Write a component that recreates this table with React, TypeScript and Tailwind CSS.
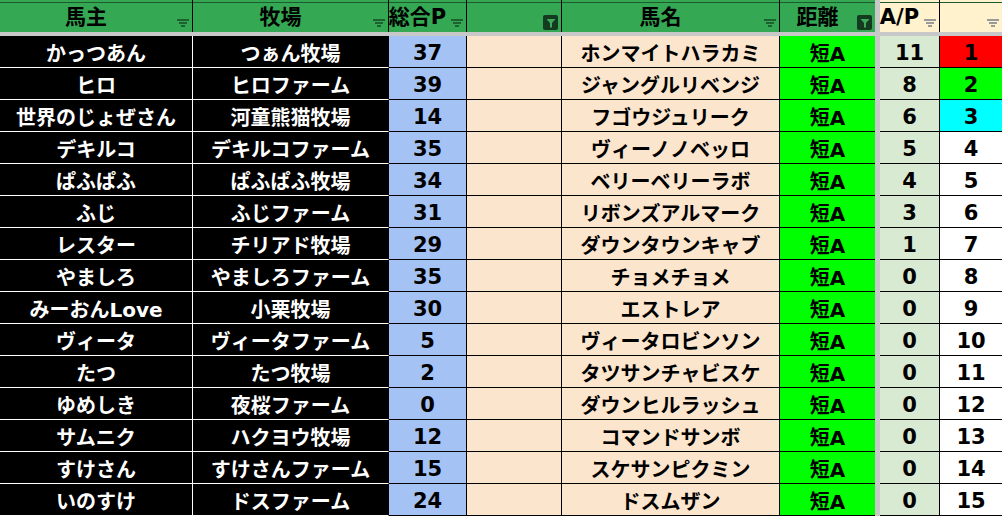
import React from 'react'

type Row = [string, string, string, string, string, string, string]

const rows: Row[] = [
  ['かっつあん', 'つぁん牧場', '37', 'ホンマイトハラカミ', '短A', '11', '1'],
  ['ヒロ', 'ヒロファーム', '39', 'ジャングルリベンジ', '短A', '8', '2'],
  ['世界のじょぜさん', '河童熊猫牧場', '14', 'フゴウジュリーク', '短A', '6', '3'],
  ['デキルコ', 'デキルコファーム', '35', 'ヴィーノノベッロ', '短A', '5', '4'],
  ['ぱふぱふ', 'ぱふぱふ牧場', '34', 'ベリーベリーラボ', '短A', '4', '5'],
  ['ふじ', 'ふじファーム', '31', 'リボンズアルマーク', '短A', '3', '6'],
  ['レスター', 'チリアド牧場', '29', 'ダウンタウンキャブ', '短A', '1', '7'],
  ['やましろ', 'やましろファーム', '35', 'チョメチョメ', '短A', '0', '8'],
  ['みーおんLove', '小栗牧場', '30', 'エストレア', '短A', '0', '9'],
  ['ヴィータ', 'ヴィータファーム', '5', 'ヴィータロビンソン', '短A', '0', '10'],
  ['たつ', 'たつ牧場', '2', 'タツサンチャビスケ', '短A', '0', '11'],
  ['ゆめしき', '夜桜ファーム', '0', 'ダウンヒルラッシュ', '短A', '0', '12'],
  ['サムニク', 'ハクヨウ牧場', '12', 'コマンドサンボ', '短A', '0', '13'],
  ['すけさん', 'すけさんファーム', '15', 'スケサンピクミン', '短A', '0', '14'],
  ['いのすけ', 'ドスファーム', '24', 'ドスムザン', '短A', '0', '15'],
]

const rankBg: Record<string, string> = {
  '1': 'bg-[#ff0000]',
  '2': 'bg-[#00ff00]',
  '3': 'bg-[#00ffff]',
}

const grid = 'grid grid-cols-[193px_196px_78px_95px_218px_95px_5px_60px_62px]'
const font = { fontFamily: '"DejaVu Sans", "Noto Sans CJK JP", sans-serif' }

function FilterIcon({ yellow }: { yellow?: boolean }) {
  return (
    <svg
      className="absolute right-[3px] bottom-[5px]"
      width="12"
      height="8"
      viewBox="0 0 12 8"
      fill={yellow ? '#9a9a9a' : 'rgba(0,0,0,0.42)'}
    >
      <rect x="0" y="0" width="12" height="2" />
      <rect x="2" y="3" width="8" height="2" />
      <rect x="4" y="6" width="4" height="2" />
    </svg>
  )
}

function ActiveFilter() {
  return (
    <div className="absolute right-[3px] bottom-[2px] flex h-[15px] w-[15px] items-center justify-center rounded-[2px] bg-[#143a20]">
      <svg width="10" height="10" viewBox="0 0 10 10" fill="#3daa5c">
        <path d="M0.5 1h9L6 5v4.5H4V5z" />
      </svg>
    </div>
  )
}

function HeadCell({
  label,
  yellow,
  active,
  last,
}: {
  label: string
  yellow?: boolean
  active?: boolean
  last?: boolean
}) {
  return (
    <div
      className={`relative flex h-[32px] flex-col ${yellow ? 'bg-[#fff2cc]' : 'bg-[#34a853]'} ${last ? '' : 'border-r border-black'}`}
    >
      <div className="h-[2px]" />
      <div className="h-px bg-[#1d5a30]" />
      <div className="flex flex-1 items-center justify-center pr-[20px] text-[21px] font-bold leading-none whitespace-nowrap text-black">
        {label}
      </div>
      {active ? <ActiveFilter /> : <FilterIcon yellow={yellow} />}
    </div>
  )
}

function Cell({ children, className }: { children?: React.ReactNode; className: string }) {
  return (
    <div
      className={`flex h-[32px] items-center justify-center overflow-visible pt-[4px] font-bold leading-none whitespace-nowrap ${className}`}
    >
      {children}
    </div>
  )
}

export default function App() {
  return (
    <div className="h-[516px] w-[1002px] overflow-hidden bg-white" style={font}>
      <div className={grid}>
        <HeadCell label="馬主" />
        <HeadCell label="牧場" />
        <HeadCell label="総合P" />
        <HeadCell label="" active />
        <HeadCell label="馬名" />
        <HeadCell label="距離" active last />
        <div className="bg-[#c8c8c8]" />
        <HeadCell label="A/P" yellow />
        <HeadCell label="" yellow last />
      </div>
      <div className={`${grid} h-[4px]`}>
        <div className="col-span-9 bg-[#c8c8c8]" />
      </div>
      {rows.map((r, i) => (
        <div key={i} className={grid}>
          <Cell className="border-r border-b border-white bg-black text-[20px] text-white">{r[0]}</Cell>
          <Cell className="border-r border-b border-r-black border-b-white bg-black text-[20px] text-white">{r[1]}</Cell>
          <Cell className="border-r border-b border-black bg-[#a4c2f4] text-[21px] text-black">{r[2]}</Cell>
          <Cell className="border-r border-b border-black bg-[#fce5cd]" />
          <Cell className="border-r border-b border-black bg-[#fce5cd] text-[20px] text-black">{r[3]}</Cell>
          <Cell className="border-b border-black bg-[#00ff00] text-[20px] text-black">{r[4]}</Cell>
          <div className="bg-[#c8c8c8]" />
          <Cell className="border-r border-b border-black bg-[#d9ead3] text-[21px] text-black">{r[5]}</Cell>
          <Cell className={`border-b border-black text-[21px] text-black ${rankBg[r[6]] ?? 'bg-white'}`}>{r[6]}</Cell>
        </div>
      ))}
    </div>
  )
}
